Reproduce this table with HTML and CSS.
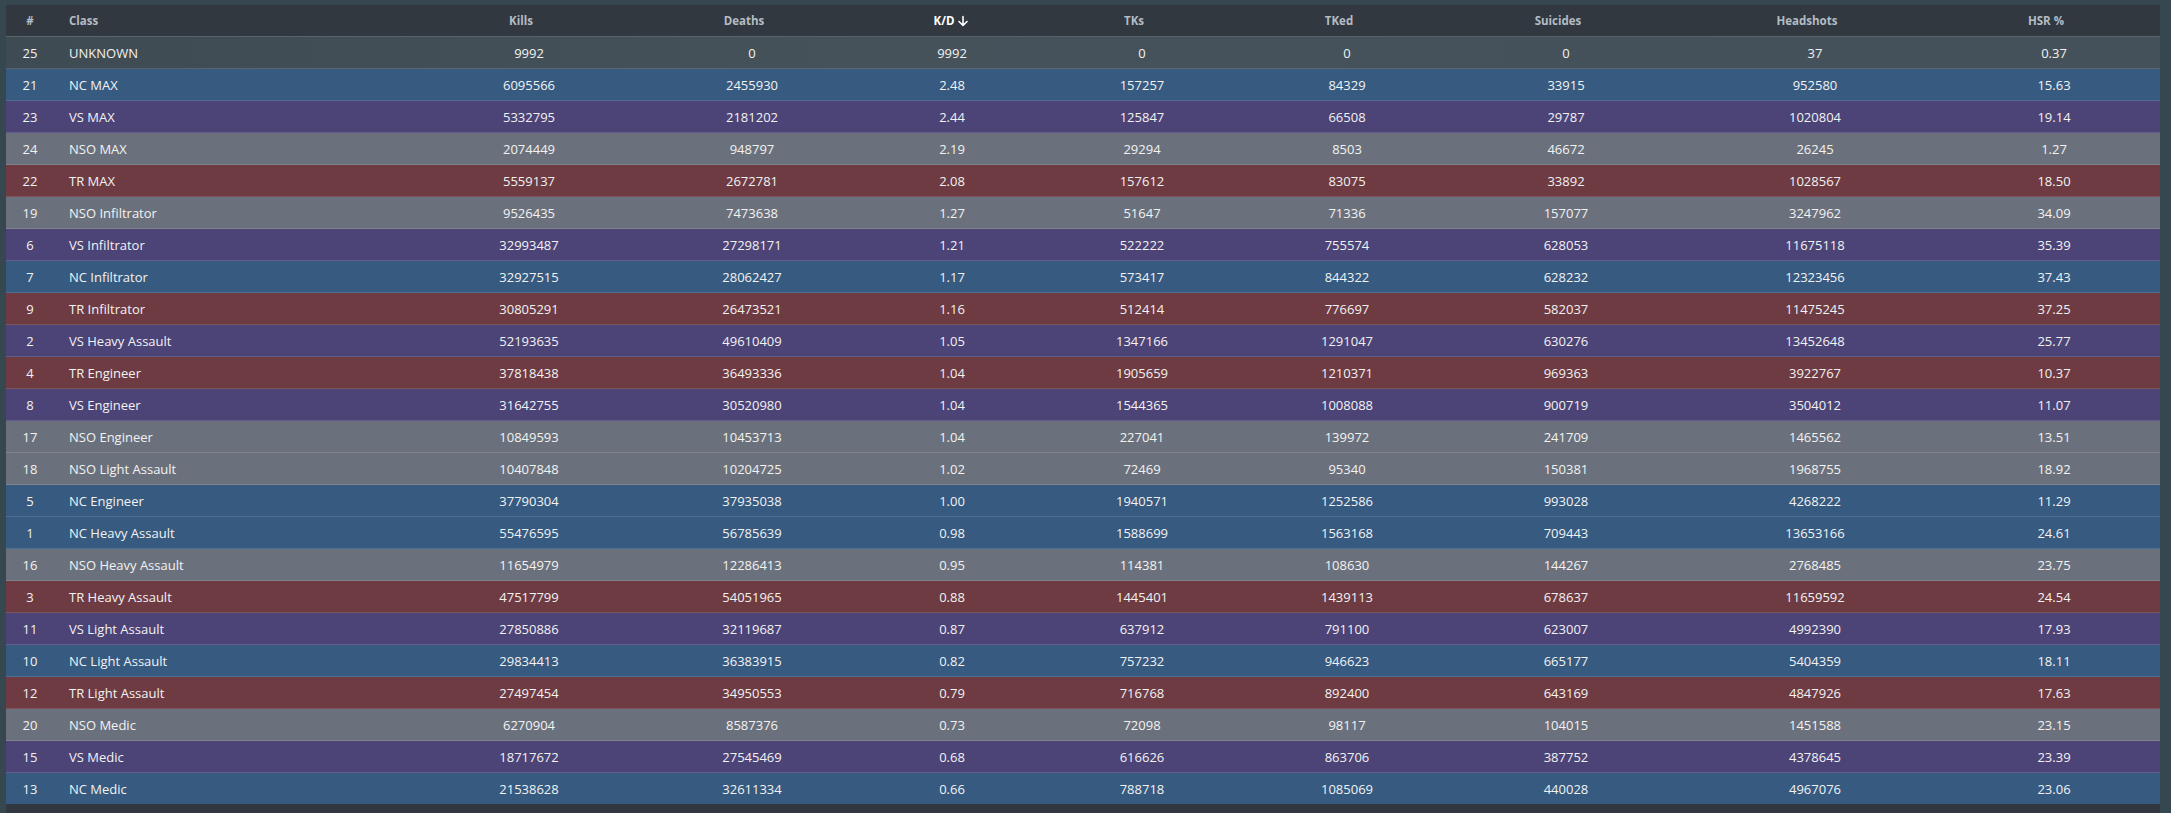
FILE: index.html
```html
<!DOCTYPE html>
<html>
<head>
<meta charset="utf-8">
<link rel="stylesheet" href="styles.css">
</head>
<body>
<div class="card">
<table class="stats">
<colgroup>
<col class="c-rank"><col class="c-class"><col class="c-kills"><col class="c-deaths"><col class="c-kd"><col class="c-tks"><col class="c-tked"><col class="c-sui"><col class="c-hs"><col class="c-hsr">
</colgroup>
<thead>
<tr>
<th>#</th>
<th class="left">Class</th>
<th><span class="h">Kills<span class="sort"></span></span></th>
<th><span class="h">Deaths<span class="sort"></span></span></th>
<th class="sorted"><span class="h">K/D<span class="sort"><svg viewBox="0 0 12 12" width="12" height="12"><path d="M6 1.5V10.5M2 6.5L6 10.5L10 6.5" fill="none" stroke="#fff" stroke-width="1.6" stroke-linecap="round" stroke-linejoin="round"/></svg></span></span></th>
<th><span class="h">TKs<span class="sort"></span></span></th>
<th><span class="h">TKed<span class="sort"></span></span></th>
<th><span class="h">Suicides<span class="sort"></span></span></th>
<th><span class="h">Headshots<span class="sort"></span></span></th>
<th><span class="h">HSR %<span class="sort"></span></span></th>
</tr>
</thead>
<tbody>
<tr class="unk"><td>25</td><td class="left">UNKNOWN</td><td>9992</td><td>0</td><td>9992</td><td>0</td><td>0</td><td>0</td><td>37</td><td>0.37</td></tr>
<tr class="nc"><td>21</td><td class="left">NC MAX</td><td>6095566</td><td>2455930</td><td>2.48</td><td>157257</td><td>84329</td><td>33915</td><td>952580</td><td>15.63</td></tr>
<tr class="vs"><td>23</td><td class="left">VS MAX</td><td>5332795</td><td>2181202</td><td>2.44</td><td>125847</td><td>66508</td><td>29787</td><td>1020804</td><td>19.14</td></tr>
<tr class="nso"><td>24</td><td class="left">NSO MAX</td><td>2074449</td><td>948797</td><td>2.19</td><td>29294</td><td>8503</td><td>46672</td><td>26245</td><td>1.27</td></tr>
<tr class="tr"><td>22</td><td class="left">TR MAX</td><td>5559137</td><td>2672781</td><td>2.08</td><td>157612</td><td>83075</td><td>33892</td><td>1028567</td><td>18.50</td></tr>
<tr class="nso"><td>19</td><td class="left">NSO Infiltrator</td><td>9526435</td><td>7473638</td><td>1.27</td><td>51647</td><td>71336</td><td>157077</td><td>3247962</td><td>34.09</td></tr>
<tr class="vs"><td>6</td><td class="left">VS Infiltrator</td><td>32993487</td><td>27298171</td><td>1.21</td><td>522222</td><td>755574</td><td>628053</td><td>11675118</td><td>35.39</td></tr>
<tr class="nc"><td>7</td><td class="left">NC Infiltrator</td><td>32927515</td><td>28062427</td><td>1.17</td><td>573417</td><td>844322</td><td>628232</td><td>12323456</td><td>37.43</td></tr>
<tr class="tr"><td>9</td><td class="left">TR Infiltrator</td><td>30805291</td><td>26473521</td><td>1.16</td><td>512414</td><td>776697</td><td>582037</td><td>11475245</td><td>37.25</td></tr>
<tr class="vs"><td>2</td><td class="left">VS Heavy Assault</td><td>52193635</td><td>49610409</td><td>1.05</td><td>1347166</td><td>1291047</td><td>630276</td><td>13452648</td><td>25.77</td></tr>
<tr class="tr"><td>4</td><td class="left">TR Engineer</td><td>37818438</td><td>36493336</td><td>1.04</td><td>1905659</td><td>1210371</td><td>969363</td><td>3922767</td><td>10.37</td></tr>
<tr class="vs"><td>8</td><td class="left">VS Engineer</td><td>31642755</td><td>30520980</td><td>1.04</td><td>1544365</td><td>1008088</td><td>900719</td><td>3504012</td><td>11.07</td></tr>
<tr class="nso"><td>17</td><td class="left">NSO Engineer</td><td>10849593</td><td>10453713</td><td>1.04</td><td>227041</td><td>139972</td><td>241709</td><td>1465562</td><td>13.51</td></tr>
<tr class="nso"><td>18</td><td class="left">NSO Light Assault</td><td>10407848</td><td>10204725</td><td>1.02</td><td>72469</td><td>95340</td><td>150381</td><td>1968755</td><td>18.92</td></tr>
<tr class="nc"><td>5</td><td class="left">NC Engineer</td><td>37790304</td><td>37935038</td><td>1.00</td><td>1940571</td><td>1252586</td><td>993028</td><td>4268222</td><td>11.29</td></tr>
<tr class="nc"><td>1</td><td class="left">NC Heavy Assault</td><td>55476595</td><td>56785639</td><td>0.98</td><td>1588699</td><td>1563168</td><td>709443</td><td>13653166</td><td>24.61</td></tr>
<tr class="nso"><td>16</td><td class="left">NSO Heavy Assault</td><td>11654979</td><td>12286413</td><td>0.95</td><td>114381</td><td>108630</td><td>144267</td><td>2768485</td><td>23.75</td></tr>
<tr class="tr"><td>3</td><td class="left">TR Heavy Assault</td><td>47517799</td><td>54051965</td><td>0.88</td><td>1445401</td><td>1439113</td><td>678637</td><td>11659592</td><td>24.54</td></tr>
<tr class="vs"><td>11</td><td class="left">VS Light Assault</td><td>27850886</td><td>32119687</td><td>0.87</td><td>637912</td><td>791100</td><td>623007</td><td>4992390</td><td>17.93</td></tr>
<tr class="nc"><td>10</td><td class="left">NC Light Assault</td><td>29834413</td><td>36383915</td><td>0.82</td><td>757232</td><td>946623</td><td>665177</td><td>5404359</td><td>18.11</td></tr>
<tr class="tr"><td>12</td><td class="left">TR Light Assault</td><td>27497454</td><td>34950553</td><td>0.79</td><td>716768</td><td>892400</td><td>643169</td><td>4847926</td><td>17.63</td></tr>
<tr class="nso"><td>20</td><td class="left">NSO Medic</td><td>6270904</td><td>8587376</td><td>0.73</td><td>72098</td><td>98117</td><td>104015</td><td>1451588</td><td>23.15</td></tr>
<tr class="vs"><td>15</td><td class="left">VS Medic</td><td>18717672</td><td>27545469</td><td>0.68</td><td>616626</td><td>863706</td><td>387752</td><td>4378645</td><td>23.39</td></tr>
<tr class="nc"><td>13</td><td class="left">NC Medic</td><td>21538628</td><td>32611334</td><td>0.66</td><td>788718</td><td>1085069</td><td>440028</td><td>4967076</td><td>23.06</td></tr>
</tbody>
</table>
</div>
</body>
</html>
```

FILE: styles.css
```css
html, body {
  margin: 0;
  padding: 0;
  background: #37474f;
  font-family: "Open Sans", "Noto Sans", "Liberation Sans", sans-serif;
  color: #f2f2f2;
}

.card {
  margin: 5px 11px 0 6px;
  background: #31383f;
  min-height: calc(100vh - 5px);
}

.stats {
  width: 2154px;
  border-collapse: collapse;
  table-layout: fixed;
  font-size: 13px;
}

.c-rank { width: 48px; }
.c-class { width: 364px; }
.c-kills { width: 222px; }
.c-deaths { width: 224px; }
.c-kd { width: 176px; }
.c-tks { width: 204px; }
.c-tked { width: 206px; }
.c-sui { width: 232px; }
.c-hs { width: 266px; }
.c-hsr { width: 212px; }

.stats th {
  height: 31px;
  padding: 0;
  font-size: 11.5px;
  font-weight: 700;
  color: #b4bcc4;
  text-align: center;
  background: #31383f;
  border-bottom: 1px solid #58636c;
}

.stats th.sorted { color: #ffffff; }

.stats th .h {
  display: inline-flex;
  align-items: center;
}

.stats th .sort {
  display: inline-flex;
  width: 13px;
  height: 12px;
  margin-left: 3px;
}

.stats td {
  height: 31px;
  padding: 0;
  text-align: center;
  border-bottom: 1px solid rgba(255, 255, 255, 0.13);
  white-space: nowrap;
}

.stats .left {
  text-align: left;
  padding-left: 15px;
}

.stats tbody tr:last-child td { border-bottom: none; }

.unk { background: linear-gradient(90deg, #3f4b53, #45525a 40%, #44515a); }
.nc { background: #365a80; }
.vs { background: #4c4377; }
.nso { background: #6b717c; }
.tr { background: #6e3b43; }
```
